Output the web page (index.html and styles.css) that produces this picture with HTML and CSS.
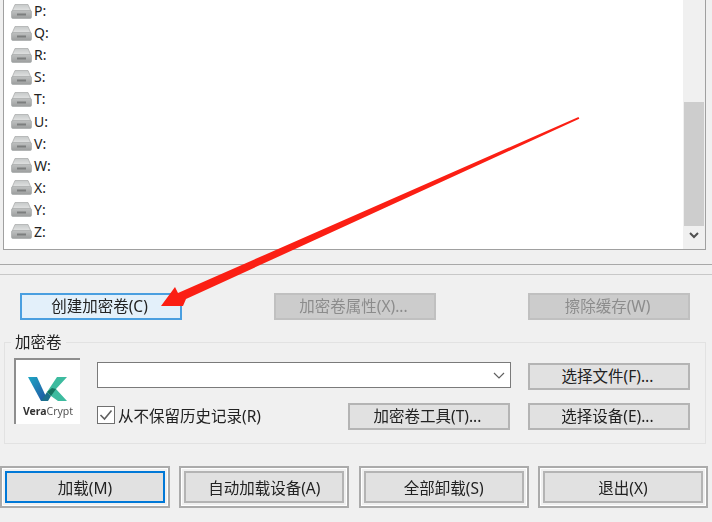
FILE: index.html
```html
<!DOCTYPE html>
<html lang="zh-CN">
<head>
    <meta charset="UTF-8">
    <meta name="viewport" content="width=device-width, initial-scale=1.0">
    <title>VeraCrypt</title>
    <link rel="stylesheet" href="styles.css">
</head>
<body>
    <svg width="0" height="0" class="defs">
        <defs>
            <linearGradient id="driveTop" x1="0" y1="0" x2="0" y2="1">
                <stop offset="0" stop-color="#c6c9c9"/>
                <stop offset="1" stop-color="#e4e5e5"/>
            </linearGradient>
            <linearGradient id="driveFront" x1="0" y1="0" x2="0" y2="1">
                <stop offset="0" stop-color="#bfc1c1"/>
                <stop offset="1" stop-color="#9c9e9e"/>
            </linearGradient>
            <symbol id="drive" viewBox="0 0 21 15">
                <path d="M4 .5h13l3 7H1z" fill="url(#driveTop)" stroke="#adafaf" stroke-width=".8"/>
                <rect x=".5" y="6.5" width="20" height="8" rx="1.5" fill="url(#driveFront)" stroke="#a0a2a2" stroke-width=".6"/>
                <rect x="6" y="9.500" width="9" height="2" fill="#7c7e7e"/>
            </symbol>
        </defs>
    </svg>

    <div class="window">
        <div class="drive-list">
            <ul class="drives">
                <li><svg class="drive-icon"><use href="#drive"/></svg>P:</li>
                <li><svg class="drive-icon"><use href="#drive"/></svg>Q:</li>
                <li><svg class="drive-icon"><use href="#drive"/></svg>R:</li>
                <li><svg class="drive-icon"><use href="#drive"/></svg>S:</li>
                <li><svg class="drive-icon"><use href="#drive"/></svg>T:</li>
                <li><svg class="drive-icon"><use href="#drive"/></svg>U:</li>
                <li><svg class="drive-icon"><use href="#drive"/></svg>V:</li>
                <li><svg class="drive-icon"><use href="#drive"/></svg>W:</li>
                <li><svg class="drive-icon"><use href="#drive"/></svg>X:</li>
                <li><svg class="drive-icon"><use href="#drive"/></svg>Y:</li>
                <li><svg class="drive-icon"><use href="#drive"/></svg>Z:</li>
            </ul>
            <div class="scrollbar">
                <div class="scroll-thumb"></div>
                <svg class="scroll-arrow" width="10" height="7" viewBox="0 0 10 7">
                    <path d="M1 1l4 4 4-4" fill="none" stroke="#505050" stroke-width="2"/>
                </svg>
            </div>
        </div>

        <div class="rule"></div>

        <div class="actions">
            <button class="btn btn-hover">创建加密卷(C)</button>
            <button class="btn btn-disabled">加密卷属性(X)...</button>
            <button class="btn btn-disabled">擦除缓存(W)</button>
        </div>

        <div class="group">
            <span class="group-title">加密卷</span>
            <div class="logo">
                <svg width="40" height="25" viewBox="0 0 40 25">
                    <defs>
                        <linearGradient id="vLeft" x1="0" y1="0" x2="1" y2="1">
                            <stop offset="0" stop-color="#1fa6c4"/>
                            <stop offset="1" stop-color="#1f4fa0"/>
                        </linearGradient>
                    </defs>
                    <path d="M0 0h9l11 24h-7z" fill="url(#vLeft)"/>
                    <path d="M13 24l6-9 4 4-3 5z" fill="#1c6f8c"/>
                    <path d="M19 15L29 0h10l-11 12 11 12h-9l-7-5z" fill="#3dbb9f"/>
                    <path d="M19 15l5-4 4 1-5 7z" fill="#14735f"/>
                </svg>
                <span class="logo-text"><b>Vera</b>Crypt</span>
            </div>
            <div class="group-fields">
                <div class="combo">
                    <svg width="12" height="7" viewBox="0 0 12 7">
                        <path d="M1 1l5 5 5-5" fill="none" stroke="#606060" stroke-width="1.2"/>
                    </svg>
                </div>
                <button class="btn btn-top">选择文件(F)...</button>
                <div class="field-row">
                    <label class="check">
                        <span class="check-box">
                            <svg width="14" height="12" viewBox="0 0 14 12">
                                <path d="M1.500 6l4 4 7-8.500" fill="none" stroke="#606060" stroke-width="1.6"/>
                            </svg>
                        </span>
                        <span class="check-label">从不保留历史记录(R)</span>
                    </label>
                    <button class="btn">加密卷工具(T)...</button>
                </div>
                <button class="btn">选择设备(E)...</button>
            </div>
        </div>

        <div class="bottom">
            <div class="frame"><button class="btn btn-big btn-focus">加载(M)</button></div>
            <div class="frame"><button class="btn btn-big">自动加载设备(A)</button></div>
            <div class="frame"><button class="btn btn-big">全部卸载(S)</button></div>
            <div class="frame"><button class="btn btn-big">退出(X)</button></div>
        </div>

        <!-- red annotation on top of the window -->
        <svg class="arrow" width="712" height="522" viewBox="0 0 712 522">
            <path d="M578.500 117l.8 1.800L186 299l-3 7-22 0 14-19 3 6z" fill="#fb1f14"/>
        </svg>
    </div>
</body>
</html>
```

FILE: styles.css
```css
* {
    box-sizing: border-box;
}
html, body {
    margin: 0;
    padding: 0;
}
body {
    font-family: "Noto Sans", "Noto Sans CJK SC", sans-serif;
    font-size: 15.5px;
    color: #222;
    background-color: #f0f0f0;
}
.defs {
    display: block;
}
/* the screenshot is a slightly scaled-up one, so everything is a bit soft */
.window {
    position: relative;
    width: 712px;
    height: 522px;
    overflow: hidden;
    filter: blur(0.4px);
}

/* drive list */
.drive-list {
    display: flex;
    justify-content: space-between;
    width: 703px;
    height: 250px;
    margin-left: 3px;
    background: white;
    border-left: 1px solid #a0a0a0;
    border-right: 1px solid #a0a0a0;
    border-bottom: 1px solid #a0a0a0;
}
.drives {
    list-style: none;
    margin: 0;
    padding: 0 0 0 7px;
}
.drives li {
    display: flex;
    align-items: center;
    height: 22.1px;
    line-height: 22px;
    font-size: 14px;
}
.drive-icon {
    width: 21px;
    height: 15px;
    margin-right: 2px;
}
.scrollbar {
    display: flex;
    flex-direction: column;
    align-items: center;
    width: 22px;
    padding-top: 102px;
    background: #f0f0f0;
}
.scroll-thumb {
    width: 20px;
    height: 124px;
    background: #cdcdcd;
}
.scroll-arrow {
    margin-top: 6px;
}

.rule {
    height: 11px;
    margin-top: 14px;
    border-top: 1px solid #a8a8a8;
    border-bottom: 1px solid #c8c8c8;
}

/* buttons */
.btn {
    display: block;
    width: 162px;
    height: 27px;
    padding: 0 3px 0 0;
    font-family: inherit;
    font-size: 15.5px;
    line-height: 1;
    color: #222;
    background: #e1e1e1;
    border: 2px solid #b4b4b4;
}
.btn-hover {
    background: #e3f0fa;
    border: 2px solid #4a9fe0;
}
.btn-disabled {
    color: #8c8c8c;
    background: #cccccc;
    border-color: #c0c0c0;
}
.btn-top {
    align-self: end;
}
.actions {
    display: flex;
    gap: 92px;
    margin: 18px 0 0 20px;
}

/* group box */
.group {
    position: relative;
    display: flex;
    gap: 17px;
    width: 702px;
    height: 102px;
    margin: 22px 0 0 4px;
    padding: 15px 0 0 9px;
    border: 1px solid #e2e2e2;
}
.group-title {
    position: absolute;
    top: -10px;
    left: 6px;
    padding: 0 4px;
    line-height: 18px;
    background: #f0f0f0;
}
.logo {
    display: flex;
    flex-direction: column;
    align-items: center;
    width: 66px;
    height: 66px;
    padding-top: 17px;
    background: white;
    border-top: 2px solid #8e8e8e;
    border-left: 2px solid #8e8e8e;
}
.logo-text {
    margin-top: 3px;
    font-size: 10.5px;
    line-height: 12px;
    color: #555;
}
.logo-text b {
    color: #333;
}
.group-fields {
    display: grid;
    grid-template-columns: 414px 162px;
    grid-template-rows: 28px 27px;
    column-gap: 17px;
    row-gap: 13px;
    padding-top: 4px;
}
.combo {
    display: flex;
    align-items: center;
    justify-content: flex-end;
    height: 26px;
    padding-right: 5px;
    background: white;
    border: 1px solid #7a7a7a;
}
.field-row {
    display: flex;
    align-items: center;
    justify-content: space-between;
    padding-right: 1px;
}
.check {
    display: flex;
    align-items: center;
    gap: 3px;
}
.check-label {
    margin-top: -3px;
}
.check-box {
    display: flex;
    align-items: center;
    justify-content: center;
    width: 18px;
    height: 18px;
    margin-top: -3px;
    background: white;
    border: 1px solid #707070;
}

/* bottom row */
.bottom {
    display: flex;
    justify-content: space-between;
    width: 708px;
    margin-top: 22px;
}
.frame {
    width: 170px;
    height: 42px;
    padding: 3px;
    border: 2px solid #ababab;
    box-shadow: inset 1px 1px 0 white, inset -1px -1px 0 white;
}
.btn-big {
    width: 100%;
    height: 32px;
    padding: 3px 0 0;
}
.btn-focus {
    border: 2px solid #0078d7;
}

.arrow {
    position: absolute;
    top: 0;
    left: 0;
}
```
